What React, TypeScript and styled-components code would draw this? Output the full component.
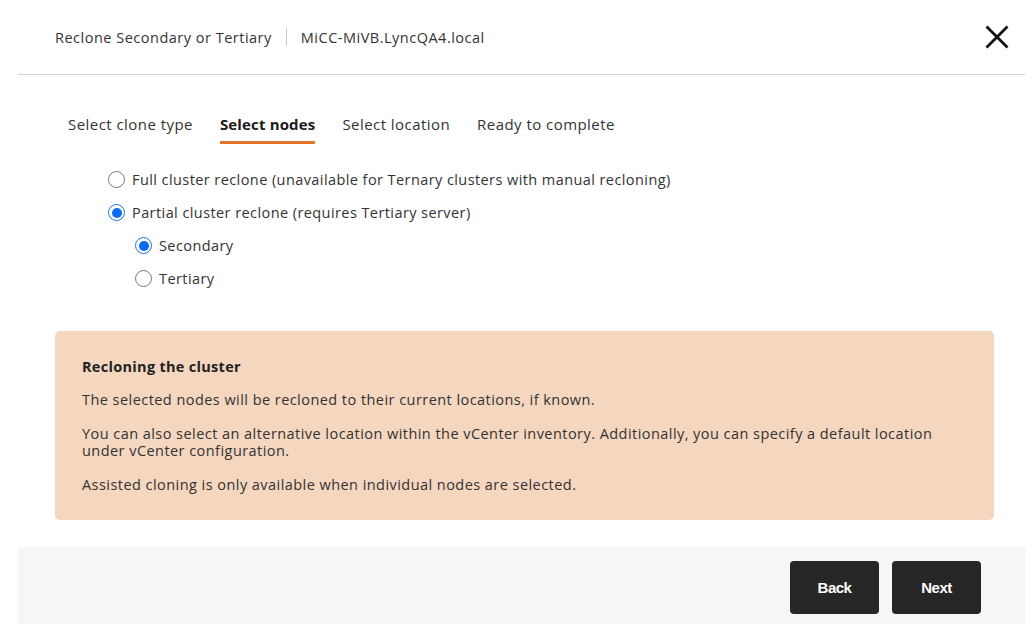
import React from "react";
import styled, { createGlobalStyle } from "styled-components";

const Global = createGlobalStyle`
  html, body { margin: 0; padding: 0; background: #ffffff; }
  body { font-family: "Open Sans", "Liberation Sans", sans-serif; color: #333333; }
  * { box-sizing: border-box; }
`;

const Modal = styled.div`
  width: 1007px;
  margin-left: 18px;
  display: flex;
  flex-direction: column;
`;

const Header = styled.header`
  height: 75px;
  border-bottom: 1px solid #d2d2d2;
  display: flex;
  align-items: center;
  justify-content: space-between;
  padding: 0 16px 0 37px;
`;

const TitleRow = styled.div`
  display: flex;
  align-items: center;
  font-size: 14.5px;
  color: #333333;
  letter-spacing: 0.5px;
`;

const Divider = styled.span`
  width: 1px;
  height: 18px;
  background: #c8c8c8;
  margin: 0 14px;
`;

const CloseButton = styled.button`
  border: none;
  background: transparent;
  padding: 0;
  width: 24px;
  height: 24px;
  display: flex;
  align-items: center;
  justify-content: center;
  cursor: pointer;
`;

const Body = styled.div`
  padding: 0 31px 0 37px;
  display: flex;
  flex-direction: column;
`;

const Tabs = styled.nav`
  display: flex;
  gap: 27px;
  padding: 39px 0 0 13px;
`;

const Tab = styled.div<{ $active?: boolean }>`
  font-size: 15px;
  line-height: 21px;
  padding-bottom: 6px;
  letter-spacing: ${(p) => (p.$active ? "0.15px" : "0.45px")};
  border-bottom: 3px solid ${(p) => (p.$active ? "#e5742b" : "transparent")};
  font-weight: ${(p) => (p.$active ? 700 : 400)};
  color: ${(p) => (p.$active ? "#1a1a1a" : "#333333")};
`;

const Options = styled.div`
  display: flex;
  flex-direction: column;
  margin: 19px 0 0 53px;
`;

const OptionRow = styled.label<{ $indent?: boolean }>`
  display: flex;
  align-items: center;
  gap: 7px;
  height: 33px;
  padding-left: ${(p) => (p.$indent ? "27px" : "0")};
  font-size: 14.5px;
  letter-spacing: 0.42px;
  color: #333333;
`;

const Radio = styled.span<{ $checked?: boolean }>`
  width: 17px;
  height: 17px;
  flex: none;
  border-radius: 50%;
  border: ${(p) => (p.$checked ? "1.5px solid #1a73e8" : "1.5px solid #767676")};
  background: #ffffff;
  display: flex;
  align-items: center;
  justify-content: center;
  &::after {
    content: "";
    width: 10px;
    height: 10px;
    border-radius: 50%;
    background: ${(p) => (p.$checked ? "#0a6cf0" : "transparent")};
  }
`;

const InfoBox = styled.section`
  margin-top: 36px;
  background: #f5d6bf;
  border-radius: 5px;
  padding: 27px 27px 27px 27px;
  font-size: 14.5px;
  line-height: 17px;
  letter-spacing: 0.45px;
  color: #333333;
`;

const InfoTitle = styled.h4`
  margin: 0 0 16px 0;
  font-size: 14.5px;
  line-height: 17px;
  font-weight: 700;
  letter-spacing: 0.3px;
  color: #222222;
`;

const InfoText = styled.p`
  margin: 0 0 17px 0;
  max-width: 870px;
  &:last-child { margin-bottom: 0; }
`;

const Footer = styled.footer`
  margin-top: 27px;
  height: 77px;
  background: #f6f6f6;
  display: flex;
  justify-content: flex-end;
  align-items: flex-start;
  gap: 13px;
  padding: 14px 44px 0 0;
`;

const Button = styled.button`
  width: 89px;
  height: 53px;
  border: none;
  border-radius: 4px;
  background: #262626;
  color: #ffffff;
  font-family: "Liberation Sans", Arial, sans-serif;
  font-weight: 700;
  font-size: 15px;
  letter-spacing: -0.5px;
  cursor: pointer;
`;

export default function App() {
  return (
    <>
      <Global />
      <Modal>
        <Header>
          <TitleRow>
            <span>Reclone Secondary or Tertiary</span>
            <Divider />
            <span>MiCC-MiVB.LyncQA4.local</span>
          </TitleRow>
          <CloseButton aria-label="Close">
            <svg width="24" height="24" viewBox="0 0 24 24">
              <path d="M1.5 1.5 L22.5 22.5 M22.5 1.5 L1.5 22.5" stroke="#111" strokeWidth="2.8" strokeLinecap="butt" />
            </svg>
          </CloseButton>
        </Header>
        <Body>
          <Tabs>
            <Tab>Select clone type</Tab>
            <Tab $active>Select nodes</Tab>
            <Tab>Select location</Tab>
            <Tab>Ready to complete</Tab>
          </Tabs>
          <Options>
            <OptionRow>
              <Radio />
              Full cluster reclone (unavailable for Ternary clusters with manual recloning)
            </OptionRow>
            <OptionRow>
              <Radio $checked />
              Partial cluster reclone (requires Tertiary server)
            </OptionRow>
            <OptionRow $indent>
              <Radio $checked />
              Secondary
            </OptionRow>
            <OptionRow $indent>
              <Radio />
              Tertiary
            </OptionRow>
          </Options>
          <InfoBox>
            <InfoTitle>Recloning the cluster</InfoTitle>
            <InfoText>The selected nodes will be recloned to their current locations, if known.</InfoText>
            <InfoText>
              You can also select an alternative location within the vCenter inventory. Additionally, you can specify a default location under vCenter configuration.
            </InfoText>
            <InfoText>Assisted cloning is only available when individual nodes are selected.</InfoText>
          </InfoBox>
        </Body>
        <Footer>
          <Button>Back</Button>
          <Button>Next</Button>
        </Footer>
      </Modal>
    </>
  );
}
